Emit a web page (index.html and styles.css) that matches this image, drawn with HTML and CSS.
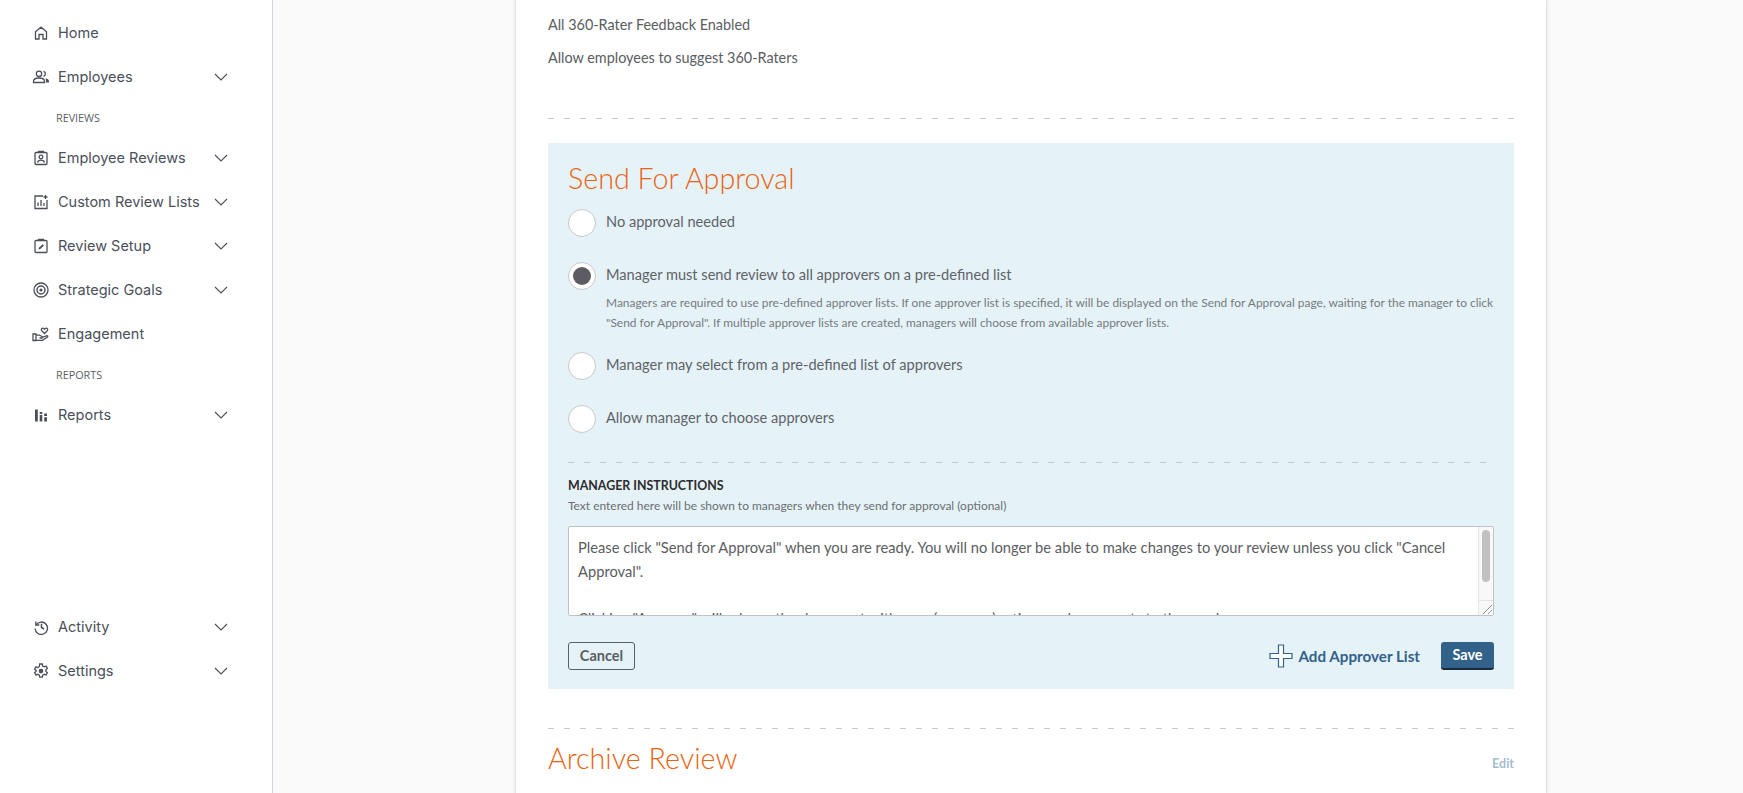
FILE: index.html
```html
<!DOCTYPE html>
<html lang="en">
<head>
<meta charset="utf-8">
<title>Send For Approval</title>
<link rel="stylesheet" href="styles.css">
</head>
<body>
<div class="app">
  <nav class="sidebar">
    <div class="nav-group">
      <a class="nav-item"><svg class="nav-icon" viewBox="0 0 16 16"><path d="M2.500 14V6.800L8 2.200l5.500 4.600V14h-3.500V9.500H6V14z"/></svg><span class="nav-label">Home</span></a>
      <a class="nav-item"><svg class="nav-icon wide" viewBox="0 0 18 16"><circle cx="7" cy="4.800" r="2.700"/><path d="M1.500 13.500v-1.300C1.500 10 3.500 9 7 9s5.500 1 5.500 3.200v1.300z"/><path d="M11.500 2.300a2.600 2.600 0 0 1 0 5"/><path class="solid" d="M13.500 9.300c2 .3 3.500 1.500 3.500 3.200v1h-3v-1.300c0-1.100-.2-2-.5-2.900z"/></svg><span class="nav-label">Employees</span><svg class="chev" viewBox="0 0 14 8"><path d="M1 1l6 6 6-6"/></svg></a>
      <div class="nav-section">REVIEWS</div>
      <a class="nav-item"><svg class="nav-icon" viewBox="0 0 16 16"><rect x="2" y="2.500" width="12" height="12" rx="1"/><path d="M5.500 2.500V1.300h5v1.200"/><circle cx="8" cy="7" r="1.800"/><path d="M4.500 12.500c.5-1.800 1.700-2.300 3.500-2.300s3 .5 3.500 2.300"/></svg><span class="nav-label">Employee Reviews</span><svg class="chev" viewBox="0 0 14 8"><path d="M1 1l6 6 6-6"/></svg></a>
      <a class="nav-item"><svg class="nav-icon" viewBox="0 0 16 16"><path d="M10 2H2v12.500h12V6"/><path d="M5 12V8.500M8 12V6M11 12V9M12.500 1v4M10.500 3h4"/></svg><span class="nav-label">Custom Review Lists</span><svg class="chev" viewBox="0 0 14 8"><path d="M1 1l6 6 6-6"/></svg></a>
      <a class="nav-item"><svg class="nav-icon" viewBox="0 0 16 16"><rect x="2" y="2.500" width="12" height="12" rx="1"/><path d="M5.500 2.500V1.300h5v1.200"/><path d="M5.500 11.500l.4-1.800 3.800-3.500 1.300 1.400-3.700 3.500z" class="solid"/></svg><span class="nav-label">Review Setup</span><svg class="chev" viewBox="0 0 14 8"><path d="M1 1l6 6 6-6"/></svg></a>
      <a class="nav-item"><svg class="nav-icon" viewBox="0 0 16 16"><circle cx="8" cy="8" r="7"/><circle class="thick" cx="8" cy="8" r="4"/><circle class="solid" cx="8" cy="8" r="1.600"/></svg><span class="nav-label">Strategic Goals</span><svg class="chev" viewBox="0 0 14 8"><path d="M1 1l6 6 6-6"/></svg></a>
      <a class="nav-item"><svg class="nav-icon wide" viewBox="0 0 18 16"><path d="M1 8h3v6.500H1zM4 9.200h3.500l2.500 1.300c.8.500.4 1.600-.6 1.500H7.500M10 11.300l4.500-1.500c1.200-.3 1.800.8.800 1.500l-5 3H4"/><path d="M12.500 7.500l-2.700-2.700c-1.500-1.700.8-3.600 2.200-2.100l.5.500.5-.5c1.400-1.500 3.700.4 2.200 2.100z"/></svg><span class="nav-label">Engagement</span></a>
      <div class="nav-section">REPORTS</div>
      <a class="nav-item"><svg class="nav-icon" viewBox="0 0 16 16"><path class="solid" d="M2 2.500h2.800v12H2zM6.700 5h2.600v2H6.700zM6.700 8h2.600v6.500H6.700zM11.200 6.500H14v2.500h-2.800zM11.200 10.300H14v4.200h-2.800z"/></svg><span class="nav-label">Reports</span><svg class="chev" viewBox="0 0 14 8"><path d="M1 1l6 6 6-6"/></svg></a>
    </div>
    <div class="nav-group">
      <a class="nav-item"><svg class="nav-icon" viewBox="0 0 16 16"><path d="M2.800 2.500v3.500h3.500"/><path d="M3 6a6.200 6.200 0 1 1-.9 3.500"/><path class="thick" d="M8.500 4.800v3.700l2.500 1.500"/></svg><span class="nav-label">Activity</span><svg class="chev" viewBox="0 0 14 8"><path d="M1 1l6 6 6-6"/></svg></a>
      <a class="nav-item"><svg class="nav-icon" viewBox="0 0 16 16"><path d="M6.700 1h2.600l.4 2 1.500.8 1.900-.7 1.300 2.300-1.500 1.300v1.700l1.500 1.300-1.300 2.300-1.900-.7-1.500.8-.4 2H6.700l-.4-2-1.500-.8-1.900.7-1.300-2.300 1.500-1.300V7.400L1.600 6.100l1.300-2.300 1.900.7 1.500-.8z"/><circle cx="8" cy="8.100" r="2.300" class="solid"/></svg><span class="nav-label">Settings</span><svg class="chev" viewBox="0 0 14 8"><path d="M1 1l6 6 6-6"/></svg></a>
    </div>
  </nav>
  <main class="main">
    <section class="card">
      <p class="line">All 360-Rater Feedback Enabled</p>
      <p class="line">Allow employees to suggest 360-Raters</p>
      <hr class="dash first-dash">
      <form class="panel">
        <h2 class="title">Send For Approval</h2>
        <div class="option">
          <span class="radio"></span><span class="opt-label">No approval needed</span>
        </div>
        <div class="option">
          <span class="radio checked"></span><span class="opt-label">Manager must send review to all approvers on a pre-defined list</span>
        </div>
        <p class="opt-help">Managers are required to use pre-defined approver lists. If one approver list is specified, it will be displayed on the Send for Approval page, waiting for the manager to click "Send for Approval". If multiple approver lists are created, managers will choose from available approver lists.</p>
        <div class="option">
          <span class="radio"></span><span class="opt-label">Manager may select from a pre-defined list of approvers</span>
        </div>
        <div class="option">
          <span class="radio"></span><span class="opt-label">Allow manager to choose approvers</span>
        </div>
        <hr class="dash panel-dash">
        <div class="field-label">MANAGER INSTRUCTIONS</div>
        <div class="field-help">Text entered here will be shown to managers when they send for approval (optional)</div>
        <div class="textarea">
          <div class="textarea-text">Please click "Send for Approval" when you are ready. You will no longer be able to make changes to your review unless you click "Cancel Approval".<br><br>Clicking "Approve" will release the document with your (manager) ratings and comments to the employee.</div>
          <div class="scrollbar"><span class="thumb"></span><span class="grip"><svg viewBox="0 0 14 14"><path d="M4 13L13 4M9 13l4-4"/></svg></span></div>
        </div>
        <div class="actions">
          <button type="button" class="btn-cancel">Cancel</button>
          <div class="actions-right">
            <a class="add-link"><svg class="plus" viewBox="0 0 24 24"><path d="M9.500 1h5v8.500H23v5h-8.500V23h-5v-8.500H1v-5h8.500z"/></svg>Add Approver List</a>
            <button type="button" class="btn-save">Save</button>
          </div>
        </div>
      </form>
      <hr class="dash archive-dash">
      <div class="archive">
        <h2 class="title archive-title">Archive Review</h2>
        <a class="edit">Edit</a>
      </div>
    </section>
  </main>
</div>
</body>
</html>
```

FILE: styles.css
```css
* { box-sizing: border-box; }
html, body { margin: 0; height: 100%; overflow: hidden; }
body { font-family: Lato, "Open Sans", sans-serif; background: #fafafa; }
.app { display: flex; height: 793px; }

.sidebar { width: 273px; flex: none; background: #fff; border-right: 1px solid #cfd3dc; padding: 11px 0 100px; display: flex; flex-direction: column; justify-content: space-between; }
.nav-item { display: flex; align-items: center; height: 44px; padding-left: 33px; color: #4a4f5a; font: 400 14.500px/20px Inter, "Open Sans", sans-serif; }
.nav-icon { width: 16px; height: 16px; flex: none; fill: none; stroke: #4a4f5a; stroke-width: 1.300; margin-right: 9px; }
.nav-icon.wide { width: 18px; margin-left: -1px; margin-right: 8px; }
.nav-icon .solid { fill: #4a4f5a; stroke: none; }
.nav-icon .thick { stroke-width: 1.500; }
.nav-label { flex: 1; }
.chev { width: 14px; height: 8px; flex: none; margin-right: 44px; fill: none; stroke: #4a4f5a; stroke-width: 1.100; }
.nav-section { height: 37px; padding-left: 56px; font: 400 10.800px/37px "Open Sans", sans-serif; color: #5b5f68; }

.main { flex: 1; display: flex; overflow: hidden; padding-left: 242px; }
.card { width: 1032px; height: 793px; flex: none; background: #fff; border: solid #e3e3e3; border-width: 0 1px; box-shadow: 0 0 3px rgba(0,0,0,.12); padding: 0 32px; overflow: hidden; }
.line { margin: 0; height: 33px; padding-top: 15px; font-size: 14.400px; line-height: 19px; color: #5a5d62; }

.dash { margin: 0; border: 0; height: 1px; background: repeating-linear-gradient(90deg, #c8c8c8 0 6px, transparent 6px 16px); }
.first-dash { margin-top: 52px; }
.panel { margin-top: 24px; height: 546px; background: #e5f2f8; padding: 17px 20px 0; }
.title { margin: 0; font: 300 28.700px/36px Lato, sans-serif; color: #eb6310; }

.option { display: flex; align-items: center; height: 29px; margin-bottom: 24px; }
.title + .option { margin-top: 12px; }
.radio { width: 28px; height: 28px; flex: none; border-radius: 50%; background: #fff; border: 1px solid #c8c8c8; margin-right: 10px; position: relative; }
.radio.checked { box-shadow: inset 0 0 0 1px #fff; }
.radio.checked::after { content: ""; position: absolute; inset: 4px; border-radius: 50%; background: #5c5c62; }
.opt-label { font-size: 14.600px; color: #5f6368; padding-bottom: 2px; }

.opt-help { margin: -21px 0 18px 38px; font-size: 11.950px; line-height: 20px; color: #767a7e; }
.panel-dash { margin-top: 29px; width: 922px; }
.field-label { margin-top: 14px; font-size: 12.400px; line-height: 17px; font-weight: 700; color: #2c2c2c; }
.field-help { margin-top: 4px; font-size: 11.980px; line-height: 15px; color: #6b6f72; }

.textarea { margin-top: 13px; height: 90px; width: 926px; background: #fff; border: 1px solid #bfc3c5; border-radius: 2px; display: flex; overflow: hidden; }
.textarea-text { flex: 1; padding: 9px 24px 0 9px; font-size: 14.700px; line-height: 23.500px; color: #5a5d62; }
.scrollbar { width: 15px; flex: none; background: #f8f8f8; border-left: 1px solid #e5e5e5; display: flex; flex-direction: column; justify-content: space-between; align-items: center; padding-top: 3px; }
.thumb { width: 8px; height: 52px; background: #c1c1c1; border-radius: 4px; }
.grip { width: 100%; height: 15px; border-top: 1px solid #e5e5e5; }
.grip svg { display: block; width: 14px; height: 14px; fill: none; stroke: #777; stroke-width: .8; }

.actions { margin-top: 26px; display: flex; justify-content: space-between; align-items: flex-start; width: 926px; }
.btn-cancel { width: 67px; height: 28px; padding: 0; background: transparent; border: 1px solid #5c6064; border-radius: 3px; color: #5c6064; font: 700 14.500px/26px Lato, sans-serif; }
.actions-right { display: flex; align-items: flex-start; }
.add-link { display: flex; align-items: center; height: 28px; font-size: 15.200px; font-weight: 700; color: #32628a; margin-right: 21px; }
.plus { width: 24px; height: 24px; fill: #fff; stroke: #32628a; stroke-width: 1.200; margin-right: 5px; }
.btn-save { width: 53px; height: 28px; padding: 0; background: #32628a; border: 0; border-bottom: 2px solid #1a2a38; border-radius: 3px; color: #fff; font: 700 14.500px/26px Lato, sans-serif; }

.archive-dash { margin-top: 39px; }
.archive { display: flex; justify-content: space-between; align-items: flex-start; margin-top: 11px; }
.edit { margin-top: 16px; font-size: 12.500px; font-weight: 700; color: #a5bccd; }
```
